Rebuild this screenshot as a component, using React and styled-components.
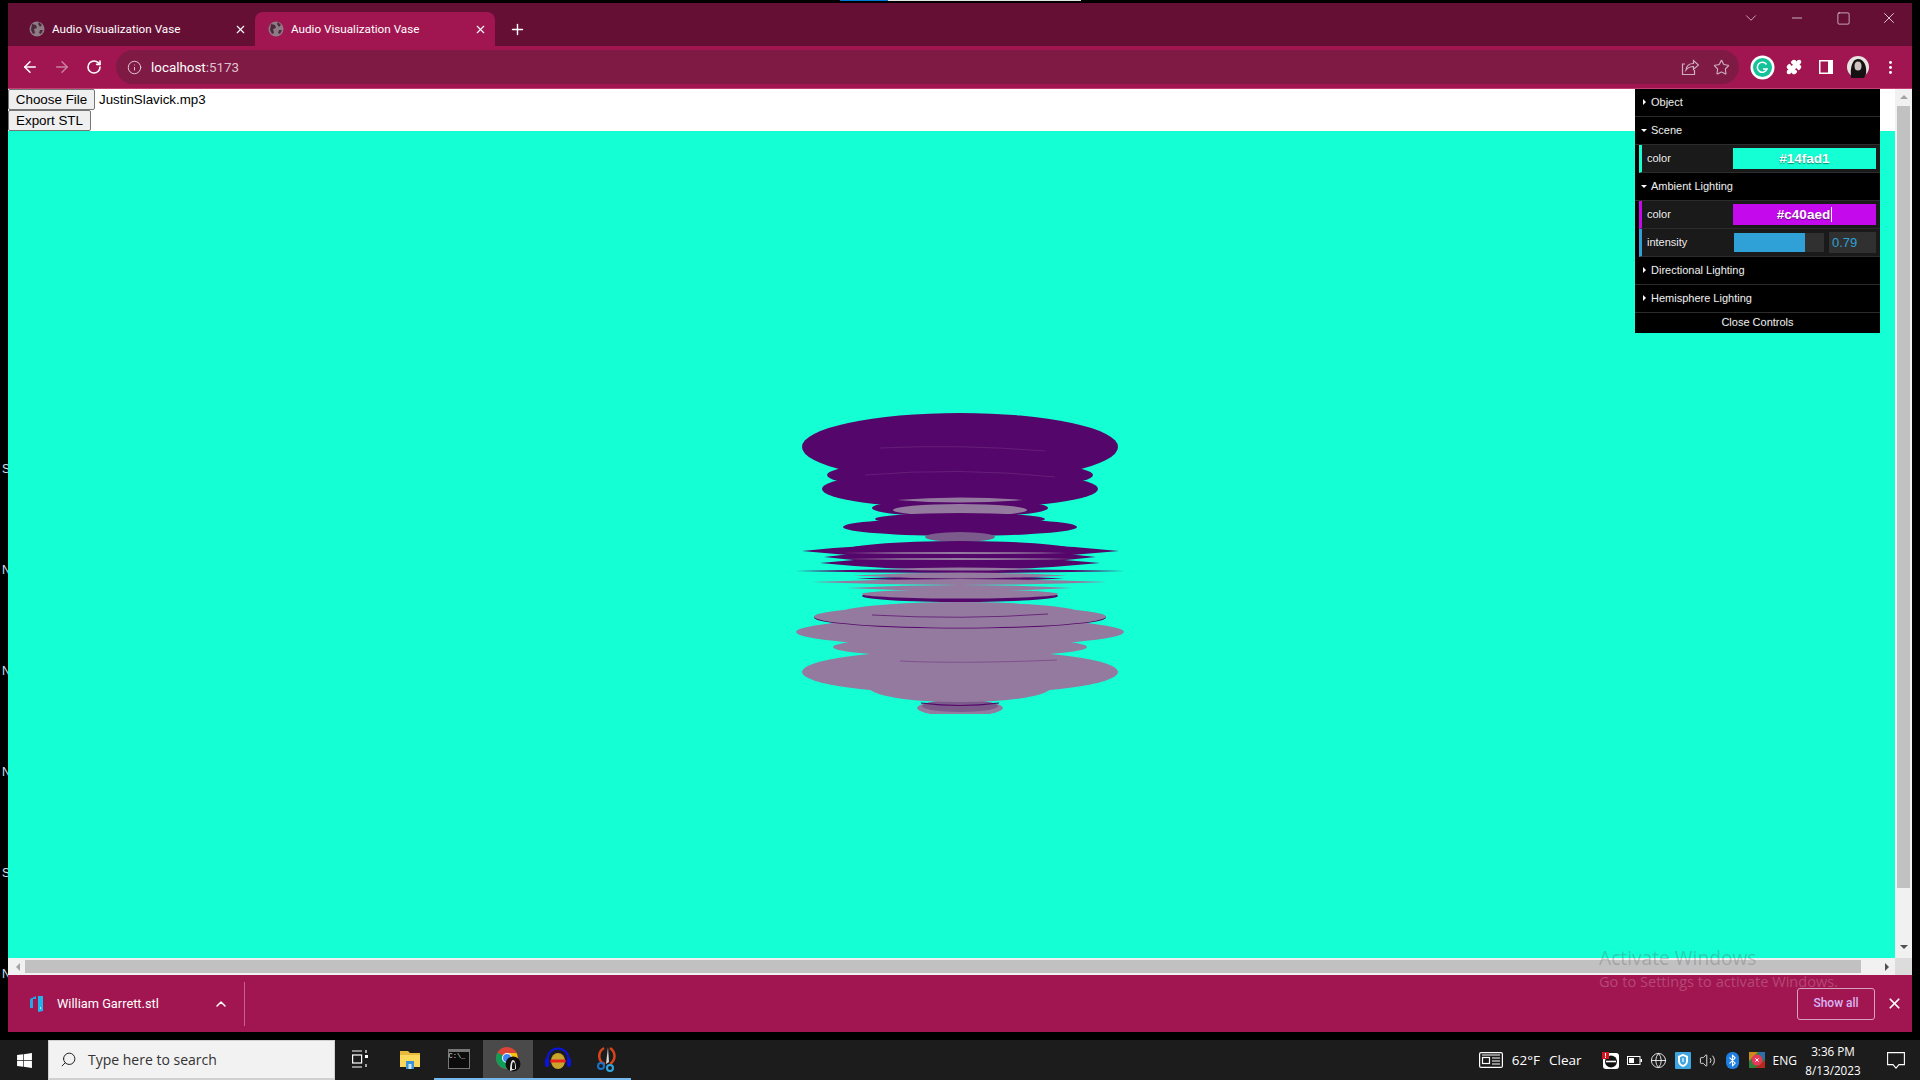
import React from 'react'
import styled, { createGlobalStyle } from 'styled-components'
import { ArrowLeft, ArrowRight, RotateCw, Info, Star, Puzzle, X, Plus, Minus, ChevronDown, ChevronUp, Search, MoreVertical, Square, Volume2, Globe, Bluetooth } from 'lucide-react'
import { FaWindows } from 'react-icons/fa'

const GlobalStyle = createGlobalStyle`
html, body { margin:0; padding:0; background:#000; }
* { box-sizing:border-box; }
`

const DARK = '#55066a'
const LIGHT = '#957aa0'
const MID = '#7b5a8c'

// ---- vase data, coords are screen pixels
const vaseBack = [
  { type: 'e', cx: 960, cy: 447, rx: 158, ry: 34, fill: DARK },
  { type: 'e', cx: 960, cy: 475, rx: 133, ry: 15, fill: DARK },
  { type: 'e', cx: 960, cy: 489, rx: 138, ry: 19, fill: DARK },
  { type: 'e', cx: 960, cy: 508, rx: 88, ry: 9, fill: DARK },
  { type: 'l', x1: 897, x2: 1023, cy: 500, ry: 2.5, fill: LIGHT },
  { type: 'e', cx: 960, cy: 510, rx: 67, ry: 6, fill: LIGHT },
  { type: 'e', cx: 960, cy: 519, rx: 85, ry: 6, fill: DARK },
  { type: 'e', cx: 960, cy: 527, rx: 117, ry: 9, fill: DARK },
  { type: 'e', cx: 960, cy: 537, rx: 35, ry: 5, fill: MID },
  { type: 'e', cx: 960, cy: 551, rx: 117, ry: 10, fill: DARK },
  { type: 'l', x1: 802, x2: 1119, cy: 551, ry: 8, fill: DARK },
  { type: 'l', x1: 824, x2: 1096, cy: 557, ry: 8, fill: DARK },
  { type: 'l', x1: 820, x2: 1100, cy: 563, ry: 7, fill: DARK },
  { type: 'l', x1: 843, x2: 1067, cy: 553, ry: 1, fill: LIGHT },
  { type: 'l', x1: 843, x2: 1075, cy: 559, ry: 1, fill: LIGHT },
  { type: 'l', x1: 795, x2: 1125, cy: 571, ry: 2, fill: DARK },
  { type: 'l', x1: 880, x2: 1037, cy: 569, ry: 1.5, fill: LIGHT },
  { type: 'l', x1: 856, x2: 1064, cy: 578.5, ry: 2.5, fill: DARK },
  { type: 'l', x1: 853, x2: 1067, cy: 575.5, ry: 3, fill: LIGHT },
  { type: 'l', x1: 812, x2: 1107, cy: 582, ry: 3, fill: LIGHT },
  { type: 'l', x1: 847, x2: 1072, cy: 588, ry: 3, fill: LIGHT },
  { type: 'e', cx: 960, cy: 596, rx: 98, ry: 6, fill: DARK },
  { type: 'e', cx: 960, cy: 594, rx: 98, ry: 4.5, fill: LIGHT },
]

const vaseFront = [
  { type: 'e', cx: 960, cy: 708, rx: 43, ry: 8, fill: LIGHT },
  { type: 'e', cx: 960, cy: 706, rx: 38, ry: 6, fill: MID },
  { type: 'e', cx: 960, cy: 632, rx: 164, ry: 14, fill: LIGHT },
  { type: 'e', cx: 960, cy: 615, rx: 125, ry: 13, fill: LIGHT },
  { type: 'e', cx: 960, cy: 617.5, rx: 146, ry: 11, fill: DARK },
  { type: 'e', cx: 960, cy: 616.7, rx: 146, ry: 11, fill: LIGHT },
  { type: 'e', cx: 960, cy: 647, rx: 127, ry: 10, fill: LIGHT },
  { type: 'e', cx: 960, cy: 672, rx: 158, ry: 22, fill: LIGHT },
  { type: 'e', cx: 960, cy: 688, rx: 90, ry: 14, fill: LIGHT },
]

const VaseShape = ({ s }) => {
  if (s.type === 'e') {
    return <ellipse cx={s.cx} cy={s.cy} rx={s.rx} ry={s.ry} fill={s.fill} />
  }
  const mid = (s.x1 + s.x2) / 2
  return <path d={`M${s.x1} ${s.cy}Q${mid} ${s.cy - s.ry * 2} ${s.x2} ${s.cy}Q${mid} ${s.cy + s.ry * 2} ${s.x1} ${s.cy}Z`} fill={s.fill} />
}

const Vase = () => (
  <VaseSvg viewBox="790 410 340 304" width="340" height="304">
    {vaseBack.map((s, i) => <VaseShape key={i} s={s} />)}
    {vaseFront.map((s, i) => <VaseShape key={i} s={s} />)}
    <path d="M872 615q90 5 176-1" stroke={DARK} strokeWidth=".7" fill="none" />
    <path d="M900 661q60 3 157-1" stroke={DARK} strokeWidth=".6" fill="none" opacity=".6" />
    <path d="M921 703q39 5 78 0" stroke={DARK} strokeWidth="1.2" fill="none" />
    <path d="M880 448q80-4 165 3M865 475q95-8 190 2" stroke="#6d2a80" strokeWidth=".7" fill="none" />
  </VaseSvg>
)

// ---- little drawn icons
const Favicon = () => (
  <svg width="16" height="16" viewBox="0 0 16 16">
    <circle cx="8" cy="8" r="7.5" fill="#8f7b85" />
    <path d="M3 3l4 1 1 3-3 1 1 4-2 1-2-4zM10 1l3 3-2 2-2-3zM11 9l3 0-2 4-2-1z" fill="#4b2a3b" />
  </svg>
)

const ShareIcon = () => (
  <svg width="18" height="18" viewBox="0 0 18 18" fill="none" stroke="#cdb0bf" strokeWidth="1.2">
    <path d="M4 6H1.5v10.5h12V12" />
    <path d="M5 12c.5-4 3-6.5 7.5-6.5V2.5l5 4.5-5 4.5V8.500C9 8.500 6.500 10 5 12z" />
  </svg>
)

const GrammarlyIcon = () => (
  <svg width="25" height="25" viewBox="0 0 25 25">
    <circle cx="12.5" cy="12.5" r="12" fill="#fff" />
    <circle cx="12.5" cy="12.5" r="9.5" fill="#15c39a" />
    <path d="M16.5 9.5a5 5 0 1 0 .5 4.500h-4" fill="none" stroke="#fff" strokeWidth="1.6" />
  </svg>
)

const SidePanelIcon = () => (
  <svg width="14" height="14" viewBox="0 0 14 14">
    <rect width="14" height="14" fill="#fff" />
    <rect x="1.5" y="1.5" width="7.5" height="11" fill="#a11650" />
  </svg>
)

const AvatarIcon = () => (
  <svg width="22" height="22" viewBox="0 0 22 22">
    <circle cx="11" cy="11" r="11" fill="#e8e4e2" />
    <path d="M4 22C3 12 5 3 11 3s9 7 8 15l-2 4z" fill="#161214" />
    <ellipse cx="11" cy="10" rx="3.5" ry="4.5" fill="#cfc3bf" />
  </svg>
)

const DownloadFileIcon = () => (
  <svg width="14" height="16" viewBox="0 0 14 16">
    <path d="M0 3l6-3v3H3v9H0z" fill="#25a5e8" />
    <path d="M8 0h5v15l-5 1z" fill="#1fb4ec" />
    <rect x="10" y="11" width="1" height="2" fill="#bfe9ff" />
  </svg>
)

const NewsIcon = () => (
  <svg width="24" height="16" viewBox="0 0 24 16" fill="none" stroke="#fff" strokeWidth="1.2">
    <rect x=".6" y=".6" width="22.8" height="14.8" rx="1.5" />
    <rect x="3.5" y="5.5" width="7" height="6" />
    <path d="M3 3h18M13 6h8M13 9h8M13 12h8" />
  </svg>
)

const TaskViewIcon = () => (
  <svg width="16" height="18" viewBox="0 0 16 18" fill="none" stroke="#fff" strokeWidth="1.2">
    <path d="M0 1h10M0 17h10" />
    <rect x=".6" y="5" width="9" height="8" />
    <path d="M14 0v3M14 14v3" />
    <rect x="13" y="5" width="3" height="3" fill="#fff" stroke="none" />
  </svg>
)

const ExplorerIcon = () => (
  <svg width="22" height="22" viewBox="0 0 22 22">
    <path d="M1 3h8l2 2h10v14H1z" fill="#e7b93f" />
    <rect x="1" y="7" width="20" height="12" fill="#fbd75c" />
    <path d="M7 13h8v8H7z" fill="#3a93d6" />
    <rect x="9.5" y="16" width="3" height="5" fill="#cfe6f6" />
  </svg>
)

const TerminalIcon = () => (
  <Terminal>
    <TerminalText>C:\_</TerminalText>
  </Terminal>
)

const ChromeIcon = () => (
  <svg width="26" height="26" viewBox="0 0 26 26">
    <circle cx="12" cy="12" r="11" fill="#db4437" />
    <path d="M12 12L2.5 6.500A11 11 0 0 0 12 23l5-6z" fill="#0f9d58" />
    <path d="M12 7h9.5A11 11 0 0 1 12 23l5-7z" fill="#f4c20d" />
    <circle cx="12" cy="12" r="5" fill="#fff" />
    <circle cx="12" cy="12" r="4" fill="#4285f4" />
    <circle cx="18" cy="18" r="7.5" fill="#0f0f0f" />
    <path d="M15 25c0-6 1-11 3-11s3 4 3 9" fill="#e8e4e2" />
    <path d="M17 23c0-4 0-7 1.5-7s1.5 3 1.5 7z" fill="#111" />
  </svg>
)

const AudacityIcon = () => (
  <svg width="26" height="24" viewBox="0 0 26 24">
    <path d="M2.5 18V12a10.5 10.5 0 0 1 21 0v6" fill="none" stroke="#0a14dc" strokeWidth="2" />
    <rect x="0" y="11" width="4" height="9" rx="2" fill="#0a14dc" />
    <rect x="22" y="11" width="4" height="9" rx="2" fill="#0a14dc" />
    <ellipse cx="13" cy="14" rx="7" ry="8" fill="#c9a52e" />
    <rect x="5" y="12.5" width="16" height="3" rx="1.5" fill="#e8241c" />
  </svg>
)

const SnipIcon = () => (
  <svg width="22" height="26" viewBox="0 0 22 26" fill="none">
    <path d="M8 2C1 6 2 16 9 18M14 2c6 4 6 12 0 16" stroke="#d8451a" strokeWidth="2.5" />
    <path d="M12 1l1 15-3 2z" fill="#d8d8d8" />
    <circle cx="5" cy="20" r="3" stroke="#1973c8" strokeWidth="2" />
    <circle cx="14" cy="22" r="3" stroke="#35a7e0" strokeWidth="2" />
  </svg>
)

const TeamViewerIcon = () => (
  <svg width="17" height="17" viewBox="0 0 17 17">
    <rect x="1" y="1" width="16" height="16" rx="3" fill="#fff" />
    <circle cx="9" cy="9.5" r="6" fill="#111" />
    <path d="M4 9.5h10" stroke="#fff" strokeWidth="1.6" />
    <rect x="0" y="0" width="7" height="7" fill="#d4141c" />
    <rect x="3" y="1" width="1" height="3.5" fill="#fff" />
    <rect x="3" y="5" width="1" height="1" fill="#fff" />
  </svg>
)

const BatteryIcon = () => (
  <svg width="15" height="9" viewBox="0 0 15 9">
    <rect x=".5" y=".5" width="12.5" height="8" fill="none" stroke="#fff" />
    <rect x="2" y="2" width="5" height="5" fill="#fff" />
    <rect x="13.5" y="3" width="1.5" height="3" fill="#fff" />
  </svg>
)

const ShieldIcon = () => (
  <svg width="16" height="17" viewBox="0 0 16 17">
    <rect width="16" height="17" rx="1" fill="#3fa5e2" />
    <path d="M8 2l5 2v5c0 3-2 5-5 6-3-1-5-3-5-6V4z" fill="#fff" />
    <path d="M8 4l3 1.200V9c0 2-1 3-3 4-2-1-3-2-3-4V5.200z" fill="#3fa5e2" />
    <rect x="7.4" y="6" width="1.2" height="4" fill="#fff" />
  </svg>
)

const BluetoothBadge = () => (
  <BtBadge><Bluetooth size={13} color="#fff" strokeWidth={2} /></BtBadge>
)

const ColorTrayIcon = () => (
  <svg width="16" height="16" viewBox="0 0 16 16">
    <rect width="16" height="16" fill="#2f7f3a" />
    <path d="M0 0h9L0 9z" fill="#c98a1e" />
    <path d="M16 0v9L9 0z" fill="#2a6fb0" />
    <path d="M16 16H6l10-8z" fill="#b6281e" />
    <circle cx="8" cy="8" r="5.5" fill="#e5395c" />
    <path d="M6.3 6.300l3.400 3.400M9.700 6.300l-3.400 3.400" stroke="#fff" strokeWidth="1" />
  </svg>
)

const NotifyIcon = () => (
  <svg width="18" height="17" viewBox="0 0 18 17" fill="none" stroke="#fff" strokeWidth="1.1">
    <path d="M.6.6h16.800v12H12l-3 3.500-3-3.500H.6z" />
  </svg>
)

const railLetters = ['S', 'N', 'N', 'N', 'S', 'N']
const tabs = [{ active: false }, { active: true }]

const App = () => {
  return (
    <>
      <GlobalStyle />
      <Screen>
        <TopEdge>
          <TopBlue />
          <TopWhite />
        </TopEdge>
        <Middle>
          <LeftRail>
            {railLetters.map((l, i) => <RailLetter key={i}>{l}</RailLetter>)}
          </LeftRail>
          <BrowserWindow>
            <TabStrip>
              {tabs.map((t, i) => (
                <Tab key={i} $active={t.active}>
                  <Favicon />
                  <TabTitle>Audio Visualization Vase</TabTitle>
                  <X size={13} color="#fff" strokeWidth={2} />
                </Tab>
              ))}
              <NewTab><Plus size={17} color="#fff" strokeWidth={2} /></NewTab>
              <WindowControls>
                <WinBtn><ChevronDown size={18} color="#e9d5df" strokeWidth={1} /></WinBtn>
                <WinBtn><Minus size={16} color="#fff" strokeWidth={1} /></WinBtn>
                <WinBtn><Square size={15} color="#fff" strokeWidth={1} /></WinBtn>
                <WinBtn><X size={18} color="#fff" strokeWidth={1} /></WinBtn>
              </WindowControls>
            </TabStrip>
            <Toolbar>
              <NavBtn><ArrowLeft size={18} color="#fff" strokeWidth={2} /></NavBtn>
              <NavBtn><ArrowRight size={18} color="#c9829f" strokeWidth={2} /></NavBtn>
              <NavBtn><RotateCw size={16} color="#fff" strokeWidth={2.4} /></NavBtn>
              <AddressBar>
                <Info size={15} color="#e0c6d2" strokeWidth={1.6} />
                <Url>localhost<UrlPort>:5173</UrlPort></Url>
                <AddressIcons>
                  <ShareIcon />
                  <Star size={17} color="#cdb0bf" strokeWidth={1.6} />
                </AddressIcons>
              </AddressBar>
              <ToolIcons>
                <ToolSlot><GrammarlyIcon /></ToolSlot>
                <ToolSlot><Puzzle size={16} color="#fff" fill="#fff" /></ToolSlot>
                <ToolSlot><SidePanelIcon /></ToolSlot>
                <ToolSlot><AvatarIcon /></ToolSlot>
                <ToolSlot><MoreVertical size={17} color="#fff" strokeWidth={2.2} /></ToolSlot>
              </ToolIcons>
            </Toolbar>
            <Page>
              <PageMain>
                <Viewport>
                  <PageHeader>
                    <FileRow>
                      <PageButton $w={87}>Choose File</PageButton>
                      <FileName>JustinSlavick.mp3</FileName>
                    </FileRow>
                    <FileRow>
                      <PageButton $w={83}>Export STL</PageButton>
                    </FileRow>
                  </PageHeader>
                  <Canvas>
                    <Vase />
                  </Canvas>
                  <Gui>
                    <GuiTitle>Object</GuiTitle>
                    <GuiTitle $open>Scene</GuiTitle>
                    <GuiRow $color="#14ffd3">
                      <GuiLabel>color</GuiLabel>
                      <ColorField $bg="#14ffd3">#14fad1</ColorField>
                    </GuiRow>
                    <GuiTitle $open>Ambient Lighting</GuiTitle>
                    <GuiRow $color="#c40aed">
                      <GuiLabel>color</GuiLabel>
                      <ColorField $bg="#c40aed">#c40aed<Caret /></ColorField>
                    </GuiRow>
                    <GuiRow $color="#2fa1d6">
                      <GuiLabel>intensity</GuiLabel>
                      <Slider><SliderFill style={{ width: `${0.79 * 100}%` }} /></Slider>
                      <NumberBox>0.79</NumberBox>
                    </GuiRow>
                    <GuiTitle>Directional Lighting</GuiTitle>
                    <GuiTitle>Hemisphere Lighting</GuiTitle>
                    <CloseControls>Close Controls</CloseControls>
                  </Gui>
                </Viewport>
                <VScroll>
                  <ArrowUp />
                  <VThumb />
                  <ArrowDown />
                </VScroll>
              </PageMain>
              <HScroll>
                <ArrowLeftTri />
                <HThumb />
                <ArrowRightTri />
                <ScrollCorner />
              </HScroll>
            </Page>
            <DownloadBar>
              <DownloadItem>
                <DownloadFileIcon />
                <DownloadName>William Garrett.stl</DownloadName>
                <ChevronUp size={16} color="#fff" strokeWidth={2.2} />
              </DownloadItem>
              <Divider />
              <ShowAll>Show all</ShowAll>
              <X size={17} color="#fff" strokeWidth={2.4} />
            </DownloadBar>
          </BrowserWindow>
        </Middle>
        <Taskbar>
          <StartBtn><FaWindows size={17} color="#fff" /></StartBtn>
          <SearchBox>
            <Search size={17} color="#222" strokeWidth={1.4} style={{ transform: 'scaleX(-1)' }} />
            <SearchText>Type here to search</SearchText>
          </SearchBox>
          <TaskSlot $w={50}><TaskViewIcon /></TaskSlot>
          <TaskSlot $w={49}><ExplorerIcon /></TaskSlot>
          <TaskSlot $w={49} $running><TerminalIcon /></TaskSlot>
          <TaskSlot $w={50} $running $active><ChromeIcon /></TaskSlot>
          <TaskSlot $w={49} $running><AudacityIcon /></TaskSlot>
          <TaskSlot $w={49} $running><SnipIcon /></TaskSlot>
          <Tray>
            <NewsIcon />
            <Weather>62°F</Weather>
            <Weather>Clear</Weather>
            <TrayIcons>
              <TeamViewerIcon />
              <BatteryIcon />
              <Globe size={17} color="#fff" strokeWidth={1.2} />
              <ShieldIcon />
              <Volume2 size={17} color="#fff" strokeWidth={1.2} />
              <BluetoothBadge />
              <ColorTrayIcon />
            </TrayIcons>
            <Lang>ENG</Lang>
            <Clock>
              <span>3:36 PM</span>
              <span>8/13/2023</span>
            </Clock>
            <NotifyIcon />
          </Tray>
        </Taskbar>
        <Activate>
          <ActivateTitle>Activate Windows</ActivateTitle>
          <ActivateSub>Go to Settings to activate Windows.</ActivateSub>
        </Activate>
      </Screen>
    </>
  )
}

const Screen = styled.div`
position:relative;
width:1920px;
height:1080px;
background:#000;
overflow:hidden;
display:flex;
flex-direction:column;
font-family:"Liberation Sans", Arial, sans-serif;
`

const TopEdge = styled.div`
height:3px;
display:flex;
padding-left:840px;
`
const TopBlue = styled.div`
width:48px;
height:1px;
background:#0078d7;
`
const TopWhite = styled.div`
width:193px;
height:1px;
background:#e6e6e6;
`

const Middle = styled.div`
display:flex;
height:1029px;
`

const LeftRail = styled.div`
width:8px;
overflow:hidden;
padding-top:416px;
padding-left:2px;
`
const RailLetter = styled.div`
height:101px;
line-height:101px;
font-size:12px;
color:#cfe3f5;
`

const BrowserWindow = styled.div`
width:1904px;
display:flex;
flex-direction:column;
`

const TabStrip = styled.div`
height:43px;
background:#660f35;
display:flex;
align-items:flex-end;
`
const Tab = styled.div`
width:${p => (p.$active ? '240px' : '247px')};
height:34px;
display:flex;
align-items:center;
padding:0 8px 0 ${p => (p.$active ? '13px' : '21px')};
border-radius:8px 8px 0 0;
background:${p => (p.$active ? '#a11650' : 'transparent')};
`
const TabTitle = styled.span`
flex:1;
margin-left:7px;
font-family:Roboto, sans-serif;
font-size:11.7px;
color:#fff;
white-space:nowrap;
`
const NewTab = styled.div`
width:44px;
height:34px;
display:flex;
align-items:center;
justify-content:center;
`
const WindowControls = styled.div`
margin-left:auto;
align-self:flex-start;
display:flex;
height:30px;
`
const WinBtn = styled.div`
width:46px;
height:30px;
display:flex;
align-items:center;
justify-content:center;
`

const Toolbar = styled.div`
height:43px;
background:#a11650;
border-bottom:1px solid #c23f76;
display:flex;
align-items:center;
padding-left:6px;
padding-right:3px;
`
const NavBtn = styled.div`
width:32px;
height:32px;
display:flex;
align-items:center;
justify-content:center;
`
const AddressBar = styled.div`
margin-left:6px;
width:1623px;
height:34px;
border-radius:17px;
background:#7f1a44;
display:flex;
align-items:center;
padding-left:11px;
padding-right:9px;
`
const Url = styled.span`
margin-left:9px;
font-family:Roboto, sans-serif;
font-size:13.4px;
color:#fff;
`
const UrlPort = styled.span`
color:#dcc2ce;
`
const AddressIcons = styled.div`
margin-left:auto;
display:flex;
align-items:center;
gap:14px;
`
const ToolIcons = styled.div`
display:flex;
align-items:center;
margin-left:7px;
`
const ToolSlot = styled.div`
width:32px;
height:32px;
display:flex;
align-items:center;
justify-content:center;
`

const Page = styled.div`
height:886px;
display:flex;
flex-direction:column;
background:#fff;
`
const PageMain = styled.div`
height:869px;
display:flex;
`
const Viewport = styled.div`
position:relative;
width:1887px;
display:flex;
flex-direction:column;
`
const PageHeader = styled.div`
height:42px;
background:#fff;
`
const FileRow = styled.div`
height:21px;
display:flex;
align-items:center;
`
const PageButton = styled.div`
width:${p => p.$w}px;
height:21px;
border:1px solid #767676;
border-radius:2px;
background:#efefef;
font-size:13.4px;
line-height:19px;
color:#000;
text-align:center;
`
const FileName = styled.span`
margin-left:4px;
font-size:13.33px;
color:#000;
`
const Canvas = styled.div`
flex:1;
background:#14ffd3;
overflow:hidden;
`
const VaseSvg = styled.svg`
display:block;
margin:279px 0 0 782px;
`

const Gui = styled.div`
position:absolute;
top:0;
right:15px;
width:245px;
background:#000;
font-size:11px;
color:#eee;
text-shadow:0 -1px 0 #111;
`
const GuiTitle = styled.div`
position:relative;
height:28px;
line-height:27px;
padding-left:16px;
border-bottom:1px solid #2c2c2c;
&:before{
  content:'';
  position:absolute;
  left:${p => (p.$open ? '6px' : '8px')};
  top:${p => (p.$open ? '12px' : '10px')};
  border-style:solid;
  border-color:${p => (p.$open ? '#fff transparent transparent transparent' : 'transparent transparent transparent #fff')};
  border-width:${p => (p.$open ? '3px 3px 0 3px' : '3px 0 3px 3px')};
}
`
const GuiRow = styled.div`
height:28px;
margin-left:4px;
border-left:3px solid ${p => p.$color};
border-bottom:1px solid #2c2c2c;
background:#1a1a1a;
display:flex;
align-items:center;
padding-right:4px;
`
const GuiLabel = styled.div`
width:91px;
padding-left:5px;
padding-bottom:2px;
`
const ColorField = styled.div`
width:143px;
height:21px;
background:${p => p.$bg};
display:flex;
align-items:center;
justify-content:center;
font-size:13.5px;
font-weight:700;
color:#fff;
text-shadow:0 1px 1px rgba(0,0,0,.45);
`
const Caret = styled.span`
display:inline-block;
width:1px;
height:15px;
background:#fff;
margin-left:1px;
`
const Slider = styled.div`
width:90px;
height:19px;
margin-left:1px;
background:#303030;
`
const SliderFill = styled.div`
height:100%;
background:#2fa1d6;
`
const NumberBox = styled.div`
width:47px;
height:21px;
margin-left:5px;
padding-left:3px;
background:#303030;
color:#2fa1d6;
font-size:13px;
line-height:21px;
text-shadow:none;
`
const CloseControls = styled.div`
height:20px;
line-height:18px;
text-align:center;
font-size:11px;
`

const VScroll = styled.div`
width:17px;
background:#f1f1f1;
display:flex;
flex-direction:column;
align-items:center;
`
const ArrowUp = styled.div`
margin-top:6px;
border-style:solid;
border-width:0 4px 4px 4px;
border-color:transparent transparent #a3a3a3 transparent;
`
const VThumb = styled.div`
width:13px;
height:782px;
margin-top:7px;
background:#c1c1c1;
`
const ArrowDown = styled.div`
margin-top:57px;
border-style:solid;
border-width:4px 4px 0 4px;
border-color:#505050 transparent transparent transparent;
`

const HScroll = styled.div`
height:17px;
background:#f1f1f1;
display:flex;
align-items:center;
padding-left:8px;
`
const ArrowLeftTri = styled.div`
border-style:solid;
border-width:4px 4px 4px 0;
border-color:transparent #a3a3a3 transparent transparent;
`
const HThumb = styled.div`
width:1836px;
height:13px;
margin-left:5px;
background:#c1c1c1;
`
const ArrowRightTri = styled.div`
margin-left:24px;
border-style:solid;
border-width:4px 0 4px 4px;
border-color:transparent transparent transparent #505050;
`
const ScrollCorner = styled.div`
width:17px;
height:17px;
margin-left:auto;
background:#dcdcdc;
`

const DownloadBar = styled.div`
height:57px;
background:#a11650;
display:flex;
align-items:center;
padding-left:22px;
padding-right:9px;
`
const DownloadItem = styled.div`
width:206px;
display:flex;
align-items:center;
padding-right:7px;
`
const DownloadName = styled.span`
flex:1;
margin-left:13px;
font-family:Roboto, sans-serif;
font-size:12.8px;
color:#fff;
`
const Divider = styled.div`
width:1px;
height:44px;
margin-left:8px;
background:#c4648d;
`
const ShowAll = styled.div`
margin-left:auto;
margin-right:11px;
width:78px;
height:32px;
border:1px solid #d8a2ba;
border-radius:3px;
text-align:center;
line-height:29px;
font-family:Roboto, sans-serif;
font-size:12px;
font-weight:500;
color:#d9b5f5;
`

const Taskbar = styled.div`
height:40px;
margin-top:8px;
background:#1c1c1c;
display:flex;
align-items:stretch;
`
const StartBtn = styled.div`
width:48px;
display:flex;
align-items:center;
justify-content:center;
`
const SearchBox = styled.div`
width:287px;
background:#f2f2f2;
border:1px solid #d0d0d0;
border-bottom-width:2px;
display:flex;
align-items:center;
padding-left:11px;
`
const SearchText = styled.span`
margin-left:11px;
font-family:"Open Sans", sans-serif;
font-size:14px;
color:#333;
`
const TaskSlot = styled.div`
width:${p => p.$w}px;
display:flex;
align-items:center;
justify-content:center;
background:${p => (p.$active ? '#4a4a4a' : 'transparent')};
border-bottom:2px solid ${p => (p.$running ? '#76b9ed' : 'transparent')};
`
const Terminal = styled.div`
width:22px;
height:20px;
background:#0c0c0c;
border:1px solid #777;
border-top-width:3px;
`
const TerminalText = styled.div`
font-family:"Liberation Mono", monospace;
font-size:7px;
line-height:9px;
color:#ddd;
`
const Tray = styled.div`
margin-left:auto;
display:flex;
align-items:center;
padding-right:15px;
color:#fff;
font-family:"Open Sans", sans-serif;
`
const Weather = styled.span`
margin-left:9px;
font-size:13.5px;
`
const TrayIcons = styled.div`
display:flex;
align-items:center;
gap:8px;
margin-left:20px;
`
const BtBadge = styled.div`
width:13px;
height:17px;
border-radius:6px;
background:#1e7fe0;
display:flex;
align-items:center;
justify-content:center;
margin-left:2px;
margin-right:2px;
`
const Lang = styled.span`
margin-left:8px;
font-size:12px;
`
const Clock = styled.div`
width:66px;
margin:0 21px 0 3px;
display:flex;
flex-direction:column;
align-items:center;
gap:3px;
font-size:11.7px;
line-height:16px;
`

const Activate = styled.div`
position:absolute;
left:1599px;
top:946px;
font-family:"Open Sans", sans-serif;
color:rgba(255,255,255,.22);
white-space:nowrap;
`
const ActivateTitle = styled.div`
font-size:19.2px;
line-height:24px;
color:rgba(90,90,90,.3);
`
const ActivateSub = styled.div`
font-size:14.6px;
line-height:22px;
`

export default App
